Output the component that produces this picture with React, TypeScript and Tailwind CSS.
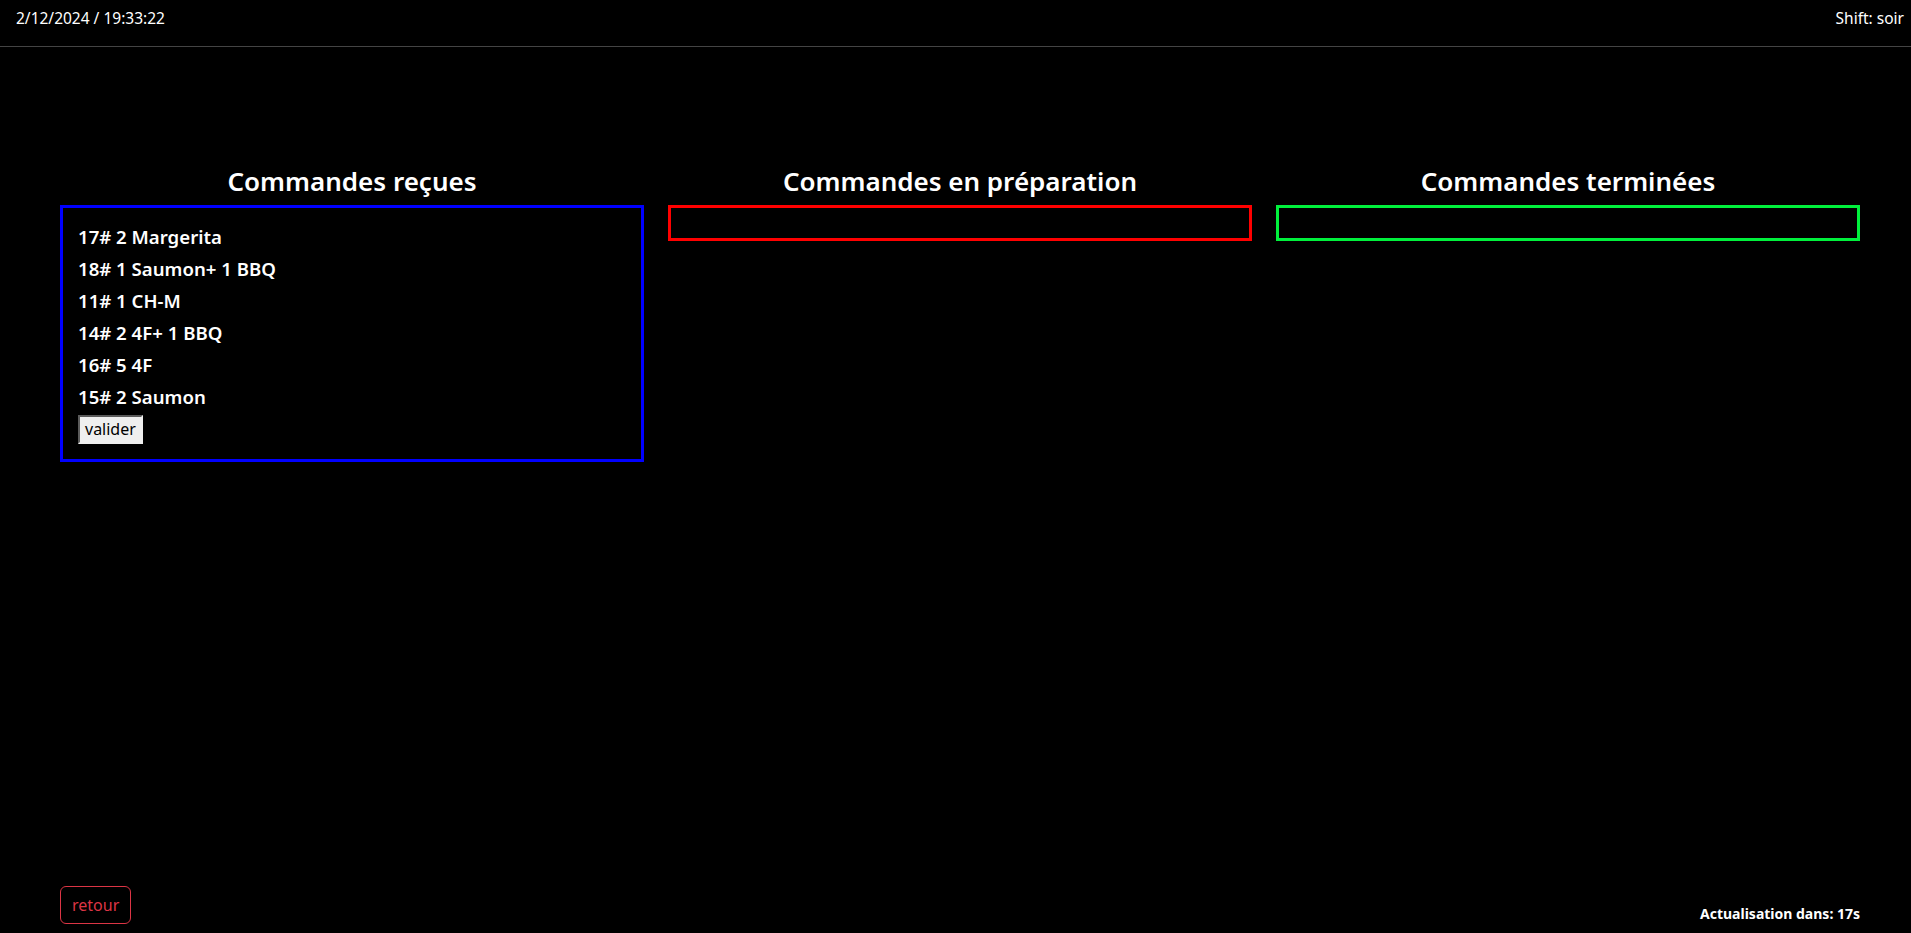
import React from 'react'

const recues = [
  '17# 2 Margerita',
  '18# 1 Saumon+ 1 BBQ',
  '11# 1 CH-M',
  '14# 2 4F+ 1 BBQ',
  '16# 5 4F',
  '15# 2 Saumon',
]

const App: React.FC = () => {
  return (
    <div
      className="min-h-screen bg-black text-white flex flex-col"
      style={{ fontFamily: '"Noto Sans", "Open Sans", sans-serif' }}
    >
      {/* Header */}
      <header className="h-[47px] border-b border-[#444] flex justify-between pl-4 pr-[7px] pt-[6px] text-[15.5px] leading-6">
        <span>2/12/2024 / 19:33:22</span>
        <span>Shift: soir</span>
      </header>

      {/* Columns */}
      <main className="mt-[119px] ml-[60px] w-[1800px] flex gap-6 items-start">
        <section className="w-[584px]">
          <h4 className="text-center text-[26px] leading-[1.2] font-semibold mb-2">Commandes reçues</h4>
          <div className="border-[3px] border-[#0000ff] px-[15px] pt-[17px] pb-[15px]">
            {recues.map((item) => (
              <h5 key={item} className="text-[18.6px] leading-6 font-semibold mb-2">
                {item}
              </h5>
            ))}
            <button className="-mt-[2px] bg-[#efefef] text-black text-base leading-[21px] px-[5px] py-[2px] border-2 border-t-[#5a5a5a] border-l-[#5a5a5a] border-r-[#efefef] border-b-[#efefef]">
              valider
            </button>
          </div>
        </section>

        <section className="w-[584px]">
          <h4 className="text-center text-[26px] leading-[1.2] font-semibold mb-2">Commandes en préparation</h4>
          <div className="border-[3px] border-[#ff0000] p-[15px]" />
        </section>

        <section className="w-[584px]">
          <h4 className="text-center text-[26px] leading-[1.2] font-semibold mb-2">Commandes terminées</h4>
          <div className="border-[3px] border-[#00f03c] p-[15px]" />
        </section>
      </main>

      {/* Footer */}
      <footer className="mt-auto ml-[60px] w-[1800px] flex justify-between items-end pb-[9px]">
        <button className="border border-[#dc3545] text-[#dc3545] rounded-md px-[11px] py-1.5 text-base leading-6">
          retour
        </button>
        <span className="text-[14px] leading-[21px] font-bold">Actualisation dans: 17s</span>
      </footer>
    </div>
  )
}

export default App
